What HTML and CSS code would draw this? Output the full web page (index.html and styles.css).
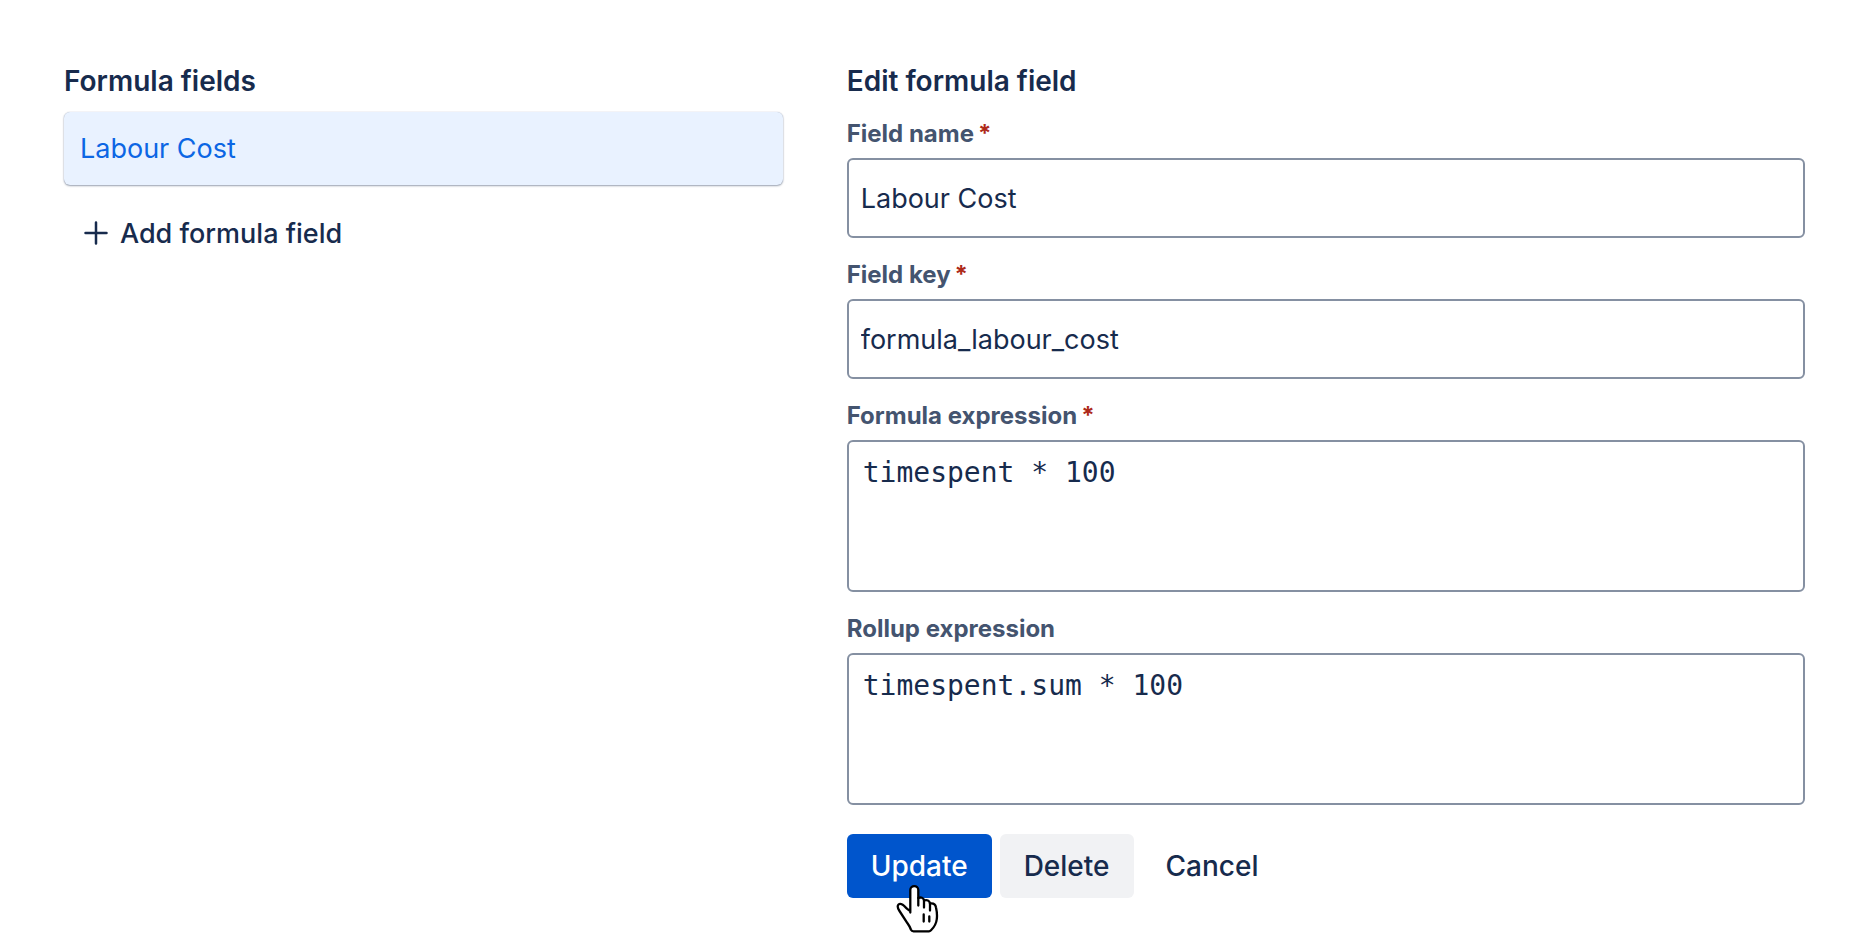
FILE: index.html
```html
<!DOCTYPE html>
<html lang="en">
<head>
    <meta charset="UTF-8">
    <meta name="viewport" content="width=device-width, initial-scale=1.0">
    <title>Formula fields</title>
    <link rel="stylesheet" href="styles.css">
</head>
<body>
    <main class="layout">
        <section class="field-list">
            <h2 class="title">Formula fields</h2>
            <a class="field-item" href="#">Labour Cost</a>
            <button class="btn btn-add" type="button">
                <svg class="plus-icon" width="24" height="24" viewBox="0 0 24 24" fill="none" stroke="currentColor" stroke-width="2.5" stroke-linecap="round" aria-hidden="true">
                    <path d="M12 1.5v21M1.5 12h21"/>
                </svg>
                Add formula field
            </button>
        </section>

        <form class="editor">
            <h2 class="title">Edit formula field</h2>

            <div class="field">
                <label for="field-name">Field name<span class="required">*</span></label>
                <input id="field-name" type="text" value="Labour Cost">
            </div>

            <div class="field">
                <label for="field-key">Field key<span class="required">*</span></label>
                <input id="field-key" type="text" value="formula_labour_cost">
            </div>

            <div class="field">
                <label for="formula">Formula expression<span class="required">*</span></label>
                <textarea id="formula" rows="3" spellcheck="false">timespent * 100</textarea>
            </div>

            <div class="field">
                <label for="rollup">Rollup expression</label>
                <textarea id="rollup" rows="3" spellcheck="false">timespent.sum * 100</textarea>
            </div>

            <div class="actions">
                <button class="btn btn-primary" type="button">
                    Update
                    <!-- hand pointer over the button -->
                    <svg class="pointer" width="44" height="50" viewBox="0 0 44 50" stroke="#000" stroke-width="2.3" stroke-linejoin="round" stroke-linecap="round" aria-hidden="true">
                        <path fill="#fff" d="M14.3 29.5V7c0-5.3 8-5.3 8 0v8c2.5-1 5.5-.5 5.7 2.500 3-.8 5.500 0 6 3 3.500-.5 5.500 1 6 4 .8 3.500 1.300 7.500.8 11.500-.5 5-3 8.500-5.800 11.300-.7.700-1.200 1-2 1H17.500c-1.200 0-2-.5-2.500-1.500-1-2.500-2-4.500-3.500-6.500L3.500 28c-1.500-2.300-2.500-5-1-6.500 1.500-1.300 4-.3 5.500 1.200 2 2.200 4 4.300 6.300 5.300"/>
                        <path fill="none" d="M22.3 15v7.500M28 17.500v7M34 20.500v7M27.700 31.500v7M33.300 33.500v5"/>
                    </svg>
                </button>
                <button class="btn btn-default" type="button">Delete</button>
                <button class="btn btn-subtle" type="button">Cancel</button>
            </div>
        </form>
    </main>
</body>
</html>
```
FILE: styles.css
```css
* {
    box-sizing: border-box;
}

body {
    margin: 0;
    background-color: #fff;
    color: #172b4d;
    font-family: Inter, sans-serif;
    font-size: 27px;
    line-height: 36px;
}

.layout {
    display: grid;
    grid-template-columns: 3fr 4fr;
    gap: 64px;
    padding: 65px 70px 48px 64px;
}

.title {
    margin: 0;
    font-size: 28px;
    font-weight: 600;
    line-height: 32px;
}

/* Left column */
.field-item {
    display: block;
    margin-top: 15px;
    padding: 19px 16px 18px;
    border-radius: 6px;
    background-color: #e9f2ff;
    box-shadow: 0 1px 2px rgba(9, 30, 66, 0.4), 0 0 1px rgba(9, 30, 66, 0.3);
    color: #0c66e4;
    text-decoration: none;
}

/* Right column */
.field {
    margin-top: 21px;
}

.field label {
    display: block;
    margin-bottom: 8px;
    color: #44546f;
    font-size: 24px;
    font-weight: 700;
    line-height: 32px;
}

.required {
    margin-left: 4px;
    color: #ae2a19;
}

.field input,
.field textarea {
    display: block;
    width: 100%;
    padding: 12px;
    border: 2px solid #8590a2;
    border-radius: 6px;
    background-color: #fff;
    color: #172b4d;
    font-family: inherit;
    font-size: 27px;
    line-height: 36px;
    outline: none;
}

.field input {
    height: 80px;
}

.field textarea {
    height: 152px;
    padding: 13px 14px;
    font-family: "DejaVu Sans Mono", monospace;
    font-size: 28px;
    resize: none;
}

/* Buttons */
.btn {
    height: 64px;
    padding: 0 24px;
    border: 0;
    border-radius: 6px;
    background-color: transparent;
    color: #172b4d;
    font-family: inherit;
    font-size: 28px;
    font-weight: 500;
    cursor: pointer;
}

.btn-add {
    display: flex;
    align-items: center;
    gap: 12px;
    margin-top: 16px;
    padding: 0 20px;
    font-size: 27px;
}

.actions {
    display: flex;
    gap: 8px;
    margin-top: 29px;
}

.btn-primary {
    position: relative;
    background-color: #0055cc;
    color: #fff;
}

.btn-default {
    background-color: #f1f2f4;
}

.pointer {
    position: absolute;
    top: 49px;
    left: 49px;
}
```
